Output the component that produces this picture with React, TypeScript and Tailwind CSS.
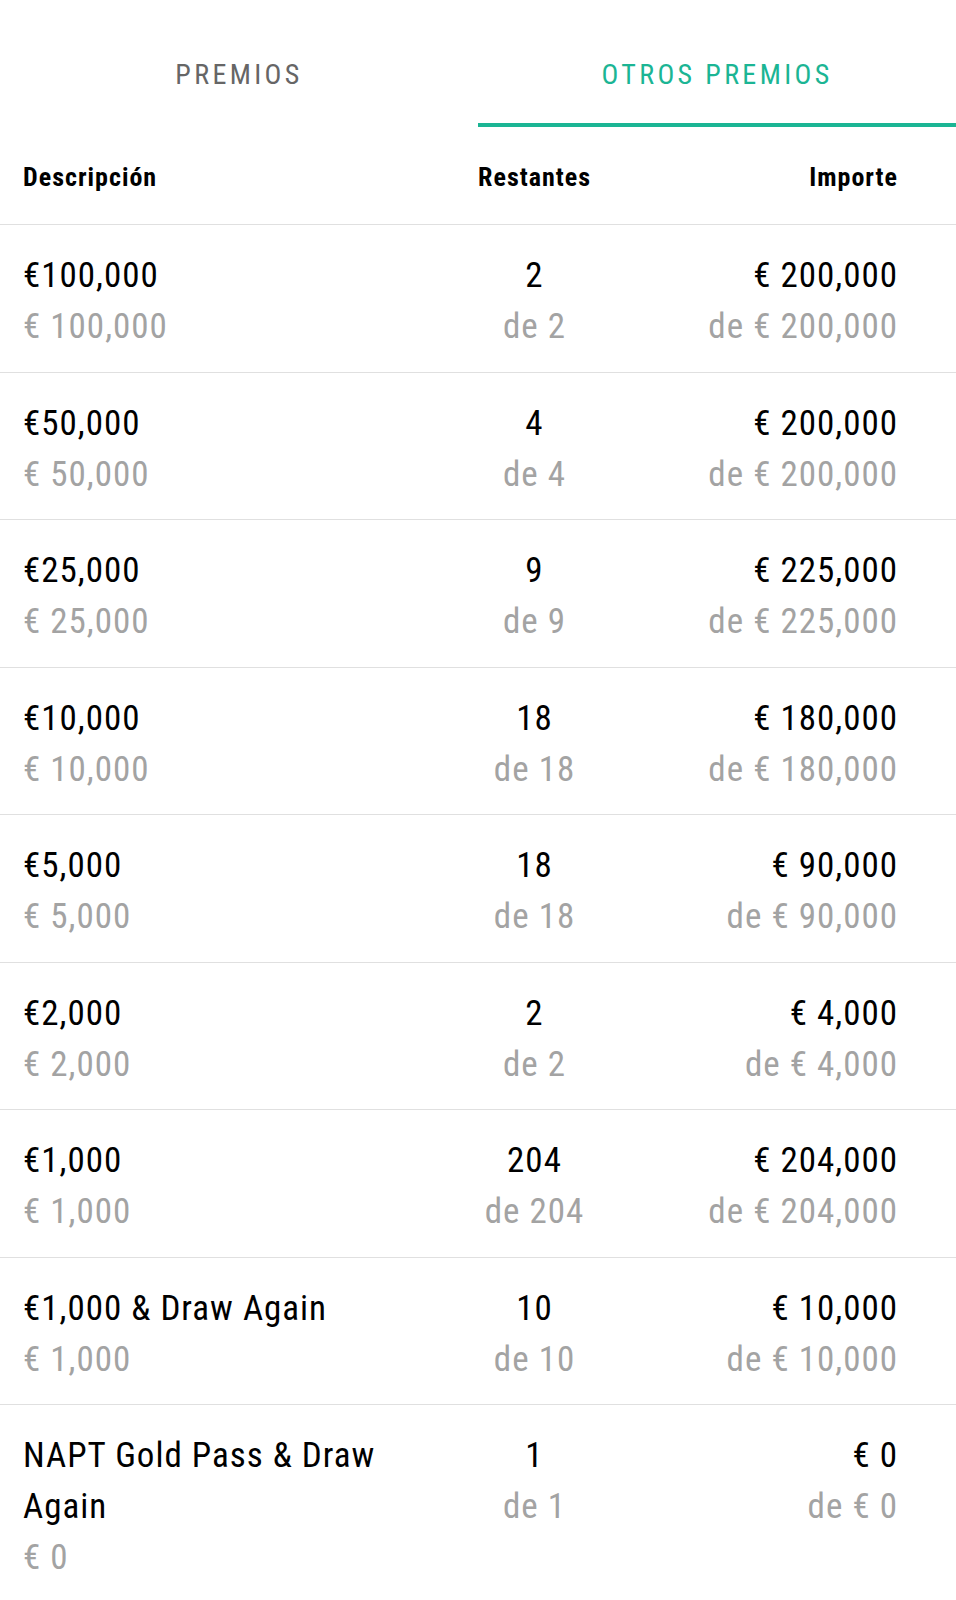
import React, { useState } from 'react';

type Prize = { desc: string; value: string; left: number; total: number; amount: string };

const prizes: Prize[] = [
  { desc: '€100,000', value: '€ 100,000', left: 2, total: 2, amount: '€ 200,000' },
  { desc: '€50,000', value: '€ 50,000', left: 4, total: 4, amount: '€ 200,000' },
  { desc: '€25,000', value: '€ 25,000', left: 9, total: 9, amount: '€ 225,000' },
  { desc: '€10,000', value: '€ 10,000', left: 18, total: 18, amount: '€ 180,000' },
  { desc: '€5,000', value: '€ 5,000', left: 18, total: 18, amount: '€ 90,000' },
  { desc: '€2,000', value: '€ 2,000', left: 2, total: 2, amount: '€ 4,000' },
  { desc: '€1,000', value: '€ 1,000', left: 204, total: 204, amount: '€ 204,000' },
  { desc: '€1,000 & Draw Again', value: '€ 1,000', left: 10, total: 10, amount: '€ 10,000' },
  { desc: 'NAPT Gold Pass & Draw Again', value: '€ 0', left: 1, total: 1, amount: '€ 0' },
];

export default function App() {
  const [tab, setTab] = useState<'premios' | 'otros'>('otros');

  return (
    <div className="min-h-screen bg-white font-['Roboto',sans-serif] font-stretch-[87.5%]">
      <div className="grid grid-cols-2 h-[127px]">
        <button
          onClick={() => setTab('premios')}
          className={`flex items-start justify-center border-b-4 pt-[61px] text-[28px] leading-[28px] tracking-[0.12em] ${tab === 'premios' ? 'border-[#1bb594] text-[#1bb594]' : 'border-transparent text-[#666666]'}`}
        >
          PREMIOS
        </button>
        <button
          onClick={() => setTab('otros')}
          className={`flex items-start justify-center border-b-4 pt-[61px] text-[28px] leading-[28px] tracking-[0.12em] ${tab === 'otros' ? 'border-[#1bb594] text-[#1bb594]' : 'border-transparent text-[#666666]'}`}
        >
          OTROS PREMIOS
        </button>
      </div>

      <div className="grid grid-cols-[410px_203px_1fr] items-center h-[98px] pt-[4px] pl-[23px] pr-[58px] border-b border-[#e0e0e0] text-[26px] font-bold tracking-[1px] text-black">
        <div>Descripción</div>
        <div className="text-center">Restantes</div>
        <div className="text-right">Importe</div>
      </div>

      {prizes.map((p, i) => (
        <div
          key={i}
          className={`grid grid-cols-[410px_203px_1fr] pl-[23px] pr-[58px] pt-[25px] pb-[19.5px] text-[35px] leading-[51px] tracking-[1px] ${i < prizes.length - 1 ? 'border-b border-[#e0e0e0]' : ''}`}
        >
          <div className="pr-[30px]">
            <div className="text-black">{p.desc}</div>
            <div className="text-[#a3a3a3]">{p.value}</div>
          </div>
          <div className="text-center">
            <div className="text-black">{p.left}</div>
            <div className="text-[#a3a3a3]">de {p.total}</div>
          </div>
          <div className="text-right">
            <div className="text-black">{p.amount}</div>
            <div className="text-[#a3a3a3]">de {p.amount}</div>
          </div>
        </div>
      ))}
    </div>
  );
}
